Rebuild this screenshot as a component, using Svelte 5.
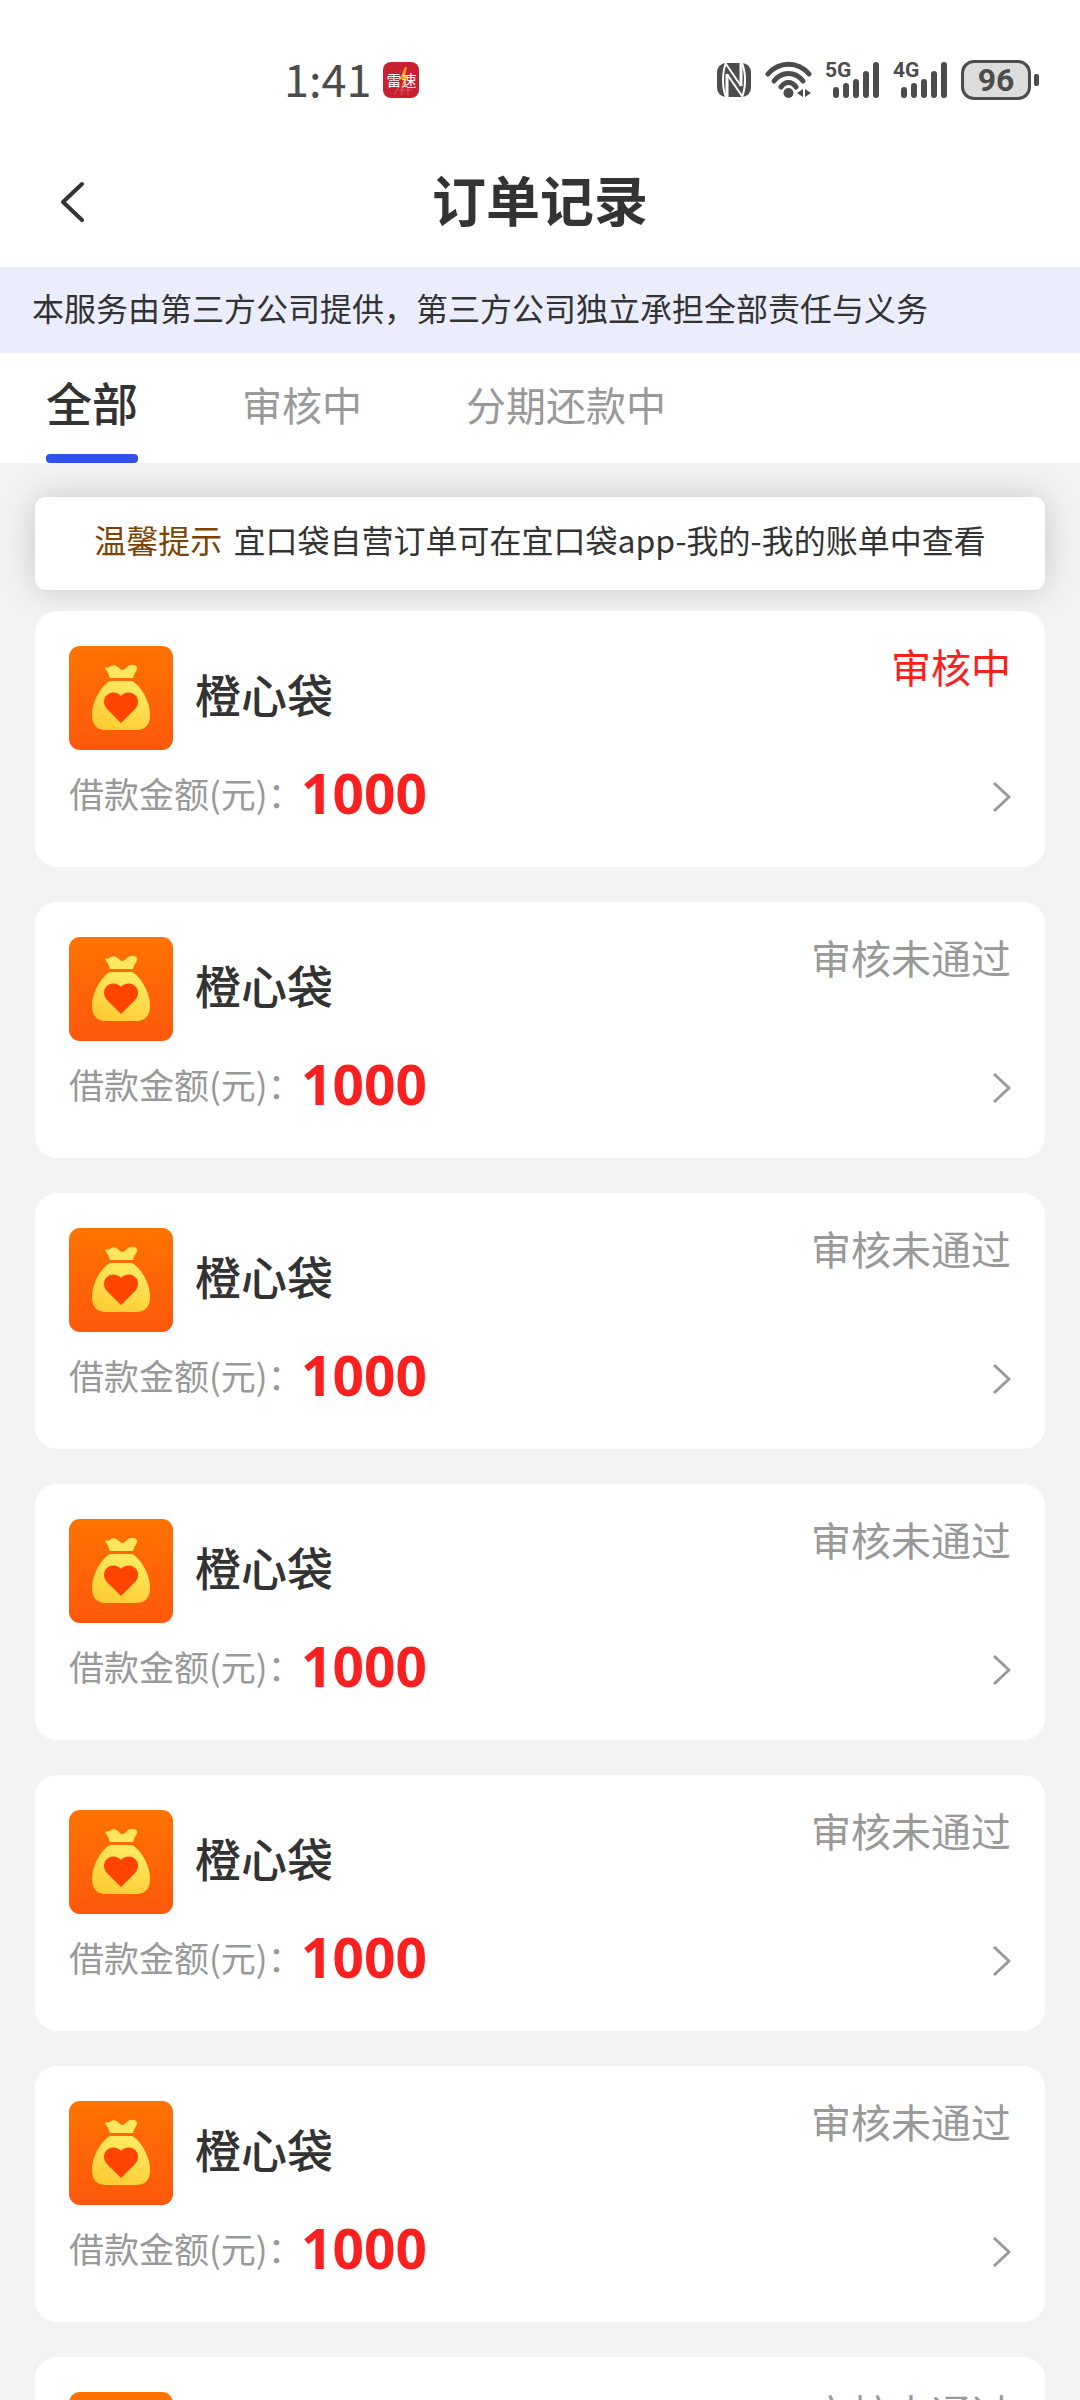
<script lang="ts">
  type Order = { id: number; name: string; amount: number; status: string; pending: boolean };

  const tabs = ['全部', '审核中', '分期还款中'];
  let active = $state(0);

  const orders: Order[] = Array.from({ length: 7 }, (_, i) => ({
    id: i,
    name: '橙心袋',
    amount: 1000,
    status: i === 0 ? '审核中' : '审核未通过',
    pending: i === 0,
  }));
</script>

{#snippet signal(label: string)}
  <span class="signal">
    <span class="net">{label}</span>
    <svg width="46" height="36" viewBox="0 0 46 36" aria-hidden="true">
      <g stroke="#4c4c4c" stroke-width="6" stroke-linecap="round">
        <path d="M3 28v5M13 24v9M23 20v13M33 12v21M43 3v30" />
      </g>
    </svg>
  </span>
{/snippet}

<div class="page">
  <div class="statusbar">
    <div class="left">
      <span class="time">1:41</span>
      <span class="badge">
        <svg width="36" height="36" viewBox="0 0 36 36" aria-hidden="true">
          <path d="M11 33l4-7M19 26v7M16 28h6M25 26v7M23 28h6" stroke="#e0566b" stroke-width="1" fill="none" />
          <path d="M22 5l-5 12h4l-3 9 8-13h-4l2-8z" fill="#f9a01b" />
        </svg>
        <span class="badge-text">雷速</span>
      </span>
    </div>
    <div class="right">
      <svg class="nfc" width="34" height="34" viewBox="0 0 34 34" aria-hidden="true">
        <rect width="34" height="34" rx="9" fill="#4c4c4c" />
        <path d="M9 0C5 10 5 24 9 34" stroke="#fff" stroke-width="2" fill="none" />
        <path d="M25 0C29 10 29 24 25 34" stroke="#fff" stroke-width="2" fill="none" />
        <path d="M10 11v23M24 0v23" stroke="#fff" stroke-width="3" fill="none" />
        <path d="M9 1L24 23M10 11L25 33" stroke="#fff" stroke-width="2" fill="none" />
      </svg>
      <svg class="wifi" width="48" height="38" viewBox="0 0 48 38" aria-hidden="true">
        <g fill="none" stroke="#4c4c4c" stroke-width="5" stroke-linecap="round">
          <path d="M3 13C14 0 33 0 44 13" />
          <path d="M9 20C17 10 30 10 38 20" />
          <path d="M16 26C20 20 27 20 31 26" />
        </g>
        <circle cx="23.500" cy="32" r="5" fill="#4c4c4c" />
        <path d="M38 28v8l-6-4zM40 28v8l6-4z" fill="#4c4c4c" />
      </svg>
      {@render signal('5G')}
      {@render signal('4G')}
      <span class="battery"><span class="cell">96</span><span class="nub"></span></span>
    </div>
  </div>

  <header>
    <button class="back" aria-label="返回">
      <svg width="28" height="44" viewBox="0 0 28 44" aria-hidden="true">
        <path d="M24 4L5 22l19 18" fill="none" stroke="#333" stroke-width="4" stroke-linecap="round" stroke-linejoin="round" />
      </svg>
    </button>
    <h1>订单记录</h1>
  </header>

  <p class="notice">本服务由第三方公司提供，第三方公司独立承担全部责任与义务</p>

  <nav>
    {#each tabs as tab, i}
      <button class="tab" class:active={active === i} onclick={() => (active = i)}>{tab}</button>
    {/each}
  </nav>

  <main>
    <p class="tip"><strong>温馨提示</strong> 宜口袋自营订单可在宜口袋app-我的-我的账单中查看</p>
    <div class="list">
      {#each orders as order (order.id)}
        <a class="card" href="#order-{order.id}">
          <span class="top">
            <svg class="logo" width="104" height="104" viewBox="0 0 104 104" aria-hidden="true">
              <defs>
                <linearGradient id="tile{order.id}" x1="0" y1="0" x2="0" y2="1">
                  <stop offset="0" stop-color="#ff7300" />
                  <stop offset="1" stop-color="#ff580c" />
                </linearGradient>
                <linearGradient id="bag{order.id}" x1="0.700" y1="0" x2="0.300" y2="1">
                  <stop offset="0" stop-color="#ffec62" />
                  <stop offset="1" stop-color="#ffcb33" />
                </linearGradient>
              </defs>
              <rect width="104" height="104" rx="11" fill="url(#tile{order.id})" />
              <path d="M36 22C38 21 40 22 42 20C45 18 48 20 50 22C52 25 55 24 57 22C60 18 66 18 68 21C69 24 66 26 65 29L64 32H41L39 27C38 25 37 24 36 22Z" fill="#ffe65c" />
              <path d="M41 35H63C72 40 81 55 81 69C81 79 76 84 67 84H37C28 84 23 79 23 69C23 55 32 40 41 35Z" fill="url(#bag{order.id})" />
              <path d="M52 77L38 63C34 59 34 52 38 49C42 45 49 46 52 50C55 46 62 45 66 49C70 52 70 59 66 63Z" fill="#ff4400" />
            </svg>
            <span class="name">{order.name}</span>
            <span class="state" class:pending={order.pending}>{order.status}</span>
          </span>
          <span class="bottom">
            <span class="label">借款金额(元)：</span>
            <span class="amount">{order.amount}</span>
            <svg class="go" width="20" height="32" viewBox="0 0 20 32" aria-hidden="true">
              <path d="M3 2l15 14L3 30" fill="none" stroke="#999" stroke-width="3" stroke-linejoin="round" />
            </svg>
          </span>
        </a>
      {/each}
    </div>
  </main>
</div>

<style>
  :global(body) {
    margin: 0;
    background: #f3f3f3;
  }
  .page {
    display: flex;
    flex-direction: column;
    height: 100vh;
    overflow: hidden;
    color: #333;
    font-family: 'Noto Sans CJK SC', 'Noto Sans', sans-serif;
  }
  h1,
  p {
    margin: 0;
  }
  button {
    border: 0;
    padding: 0;
    background: none;
    font-family: inherit;
    color: inherit;
    cursor: pointer;
  }
  .statusbar {
    display: flex;
    flex: none;
    justify-content: space-between;
    align-items: center;
    height: 160px;
    padding: 0 41px 0 284px;
    background: #fff;
    color: #4c4c4c;
  }
  .left,
  .right {
    display: flex;
    align-items: center;
  }
  .left {
    gap: 12px;
  }
  .time {
    padding-bottom: 4px;
    font-size: 45px;
    line-height: 60px;
  }
  .badge {
    display: grid;
    width: 36px;
    height: 36px;
    border-radius: 8px;
    background: #c8202f;
    overflow: hidden;
  }
  .badge > * {
    grid-area: 1 / 1;
  }
  .badge-text {
    place-self: center;
    color: #fff;
    font-size: 15px;
    line-height: 36px;
    white-space: nowrap;
  }
  .nfc {
    margin-right: 14px;
  }
  .wifi {
    margin-right: 12px;
  }
  .signal {
    display: grid;
    width: 54px;
    height: 36px;
    margin-right: 14px;
  }
  .signal > * {
    grid-area: 1 / 1;
  }
  .signal svg {
    justify-self: end;
    width: 46px;
  }
  .net {
    align-self: start;
    font: 700 21px/16px Roboto, sans-serif;
  }
  .battery {
    display: flex;
    align-items: center;
    gap: 3px;
  }
  .cell {
    box-sizing: border-box;
    width: 70px;
    height: 40px;
    border: 3px solid #4c4c4c;
    border-radius: 13px;
    background: #dcdcdc;
    font: 700 32px/34px Roboto, sans-serif;
    text-align: center;
  }
  .nub {
    width: 5px;
    height: 12px;
    border-radius: 2px;
    background: #4c4c4c;
  }
  header {
    display: grid;
    flex: none;
    grid-template-columns: 1fr auto 1fr;
    align-items: center;
    height: 84px;
    padding: 0 58px 23px;
    background: #fff;
  }
  .back {
    display: flex;
    justify-self: start;
  }
  h1 {
    padding-bottom: 6px;
    font-size: 54px;
    line-height: 78px;
    font-weight: 700;
  }
  .notice {
    flex: none;
    padding: 16px 32px 22px;
    background: #ebedfd;
    font-size: 32px;
    line-height: 48px;
  }
  nav {
    display: flex;
    flex: none;
    gap: 104px;
    height: 110px;
    padding: 0 46px;
    background: #fff;
  }
  .tab {
    box-sizing: border-box;
    display: flex;
    flex-direction: column;
    justify-content: space-between;
    padding-top: 21px;
    color: #999;
    font-size: 40px;
    line-height: 60px;
  }
  .tab::after {
    content: '';
    width: 100%;
    height: 9px;
    border-radius: 4px;
  }
  .tab.active {
    padding-top: 18px;
    color: #333;
    font-size: 46px;
    font-weight: 500;
  }
  .tab.active::after {
    background: #3152e8;
  }
  main {
    flex: 1;
    min-height: 0;
    padding: 34px 35px 0;
    overflow: hidden;
  }
  .tip {
    padding: 18px 24px 27px;
    border-radius: 11px;
    background: #fff;
    box-shadow: 0 0 36px rgba(0, 0, 0, 0.18);
    font-size: 32px;
    line-height: 48px;
    text-align: center;
  }
  .tip strong {
    margin-right: 4px;
    color: #7d4300;
    font-weight: 400;
  }
  .list {
    display: flex;
    flex-direction: column;
    gap: 35px;
    margin-top: 21px;
  }
  .card {
    display: flex;
    flex-direction: column;
    gap: 12px;
    padding: 35px 34px 40px;
    border-radius: 22px;
    background: #fff;
    color: inherit;
    text-decoration: none;
  }
  .top,
  .bottom {
    display: flex;
    align-items: center;
  }
  .name {
    margin-left: 22px;
    padding-bottom: 10px;
    font-size: 46px;
    font-weight: 500;
    line-height: 64px;
  }
  .state {
    align-self: flex-start;
    margin-left: auto;
    color: #999;
    font-size: 40px;
    line-height: 40px;
  }
  .state.pending {
    color: #fa2020;
  }
  .bottom {
    height: 65px;
  }
  .label {
    width: 232px;
    padding-bottom: 4px;
    color: #999;
    font-size: 35px;
    line-height: 52px;
    white-space: nowrap;
  }
  .amount {
    padding-bottom: 4px;
    color: #fa2020;
    font: 700 55px/60px 'Noto Sans', sans-serif;
  }
  .go {
    margin-left: auto;
    padding-top: 4px;
  }
</style>
